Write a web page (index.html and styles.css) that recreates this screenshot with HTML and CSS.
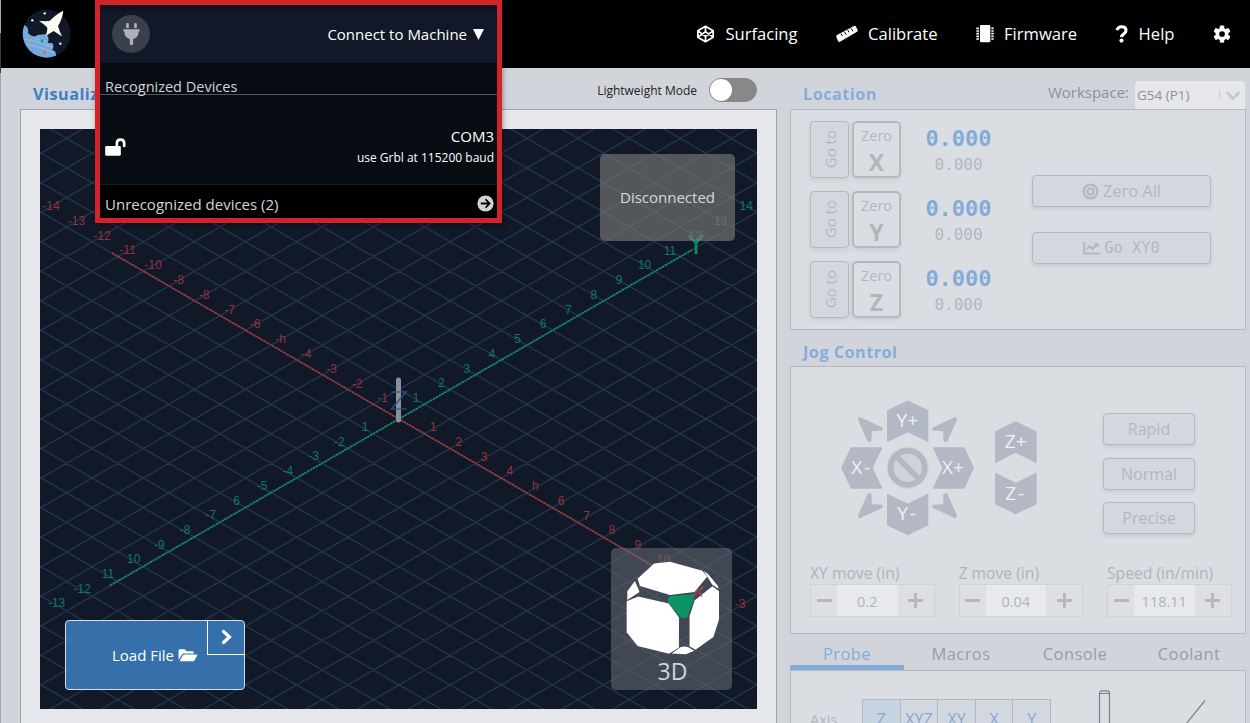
FILE: index.html
```html
<!DOCTYPE html>
<html lang="en">
<head>
<meta charset="utf-8">
<title>Machine Control</title>
<link rel="stylesheet" href="styles.css">
</head>
<body>
<div class="app">
  <header class="topbar">
    <svg class="logo" viewBox="0 0 150 150">
      <defs><clipPath id="disc"><circle cx="74" cy="74" r="72"/></clipPath></defs>
      <circle cx="74" cy="74" r="72" fill="#111827"/>
      <g clip-path="url(#disc)">
        <path d="M0 45C12 48 22 58 18 72C25 80 20 78 33 82C40 84 42 77 55 77C75 72 83 79 78 102H90C98 108 93 124 88 124C98 122 104 128 102 150H0Z" fill="#74a9dc"/>
        <path d="M5 91C40 95 60 101 91 116M11 105C40 112 65 117 94 130M20 75C40 92 60 95 75 97" fill="none" stroke="#b2d5f0" stroke-width="1.5"/>
      </g>
      <path d="M124 5C104 14 92 28 82 36C70 37 58 36 51 35C60 42 71 49 76 56C76 66 73 76 70 81C80 77 89 69 95 66C105 72 113 79 120 82C115 72 111 61 108 51C116 38 122 22 124 5Z" fill="#fffef6"/>
      <g fill="#fff"><circle cx="68" cy="13" r="3.5"/><circle cx="31" cy="34" r="3.5"/><circle cx="115" cy="104" r="3.5"/></g>
      <circle cx="27" cy="94" r="4" fill="#e9a04a"/><circle cx="60" cy="96" r="5" fill="#16a085"/><circle cx="68" cy="131" r="5" fill="#e8615e"/>
    </svg>
    <nav class="nav">
      <a class="nav-item"><svg class="ico-cube" viewBox="0 0 20 20" fill="none" stroke="#fff" stroke-width="1.9" stroke-linejoin="round"><path d="M10 1.5L18.5 6.5V13.5L10 18.5L1.5 13.5V6.5ZM1.5 6.5L10 12.5L18.5 6.5M1.5 13.5L10 7.5L18.5 13.5M10 1.5V7.5M10 12.5V18.5"/></svg><span>Surfacing</span></a>
      <a class="nav-item"><svg class="ico-ruler" viewBox="0 0 66 52"><path d="M3 29L54 2Q58 0 60 4L65 15Q66 18 62 20L12 49Q8 51 6 47L1 35Q0 31 3 29Z" fill="#fff"/><path d="M15 25L19 32M25 19L31 28M35 14L39 21M45 9L51 18" stroke="#000" stroke-width="3"/></svg><span>Calibrate</span></a>
      <a class="nav-item"><svg class="ico-chip" viewBox="0 0 54 54"><rect x="12" y="0" width="31" height="52" rx="4" fill="#fff"/><path d="M1 10H9M1 18H9M1 26H9M1 34H9M1 42H9M46 10H53M46 18H53M46 26H53M46 34H53M46 42H53" stroke="#fff" stroke-width="5"/></svg><span>Firmware</span></a>
      <a class="nav-item"><svg class="ico-help" viewBox="0 0 36 52"><path d="M5 15C7 8 12 5 18 5C26 5 31 9 31 16C31 26 19 24 18 35" fill="none" stroke="#fff" stroke-width="9"/><circle cx="18" cy="45" r="6" fill="#fff"/></svg><span>Help</span></a>
      <a class="nav-item"><svg class="ico-gear" viewBox="0 0 24 24"><g fill="#fff"><circle cx="12" cy="12" r="8.5"/><rect x="9" y="0.5" width="6" height="23" rx="1.5"/><rect x="9" y="0.5" width="6" height="23" rx="1.5" transform="rotate(60 12 12)"/><rect x="9" y="0.5" width="6" height="23" rx="1.5" transform="rotate(120 12 12)"/></g><circle cx="12" cy="12" r="3.8" fill="#000"/></svg></a>
    </nav>
  </header>

  <main class="main">
    <section class="visualizer">
      <div class="section-head vis-head">
        <h2 class="title">Visualizer</h2>
        <div class="mode"><span>Lightweight Mode</span><span class="switch"></span></div>
      </div>
      <div class="vis-panel">
        <div class="canvas">
          <svg class="scene" viewBox="40 129 717 580">
            <rect x="40" y="129" width="717" height="580" fill="#111827"/>
            <path id="grid" fill="none" stroke="#223447" stroke-width="1.5"/>
            <path d="M112 253L686 585" stroke="#a2383e" stroke-width="1.7" stroke-dasharray="2.5 .8"/>
            <path d="M110 585.5L692 250" stroke="#108c6d" stroke-width="1.7" stroke-dasharray="2.5 .8"/>
            <g id="ticks" class="ticks"></g>
            <path d="M398.5 380V420" stroke="#8b9097" stroke-width="5" stroke-linecap="round"/>
            <path d="M391.500 392H406L391.500 409H406.500" fill="none" stroke="#27578c" stroke-width="1.700" stroke-opacity=".8"/>
            <path d="M689 235L696 243L703 235M696 243V254" fill="none" stroke="#0b8766" stroke-width="3"/>
            <path d="M692 587L703 597M703 587L692 597" stroke="#a2383e" stroke-width="2"/>
          </svg>
          <div class="status">Disconnected</div>
          <div class="view-cube">
            <svg class="cube" viewBox="137 91 284 283">
              <g fill="#fff">
                <path d="M172 144L222 98L270 93L368 120L382 138L344 184L270 193L179 166Z"/>
                <path d="M139 212L174 198L266 219L297 261V352L267 371L172 347L139 306Z"/>
                <path d="M329 257L345 209L398 167L418 182V267L401 320L347 359L329 348Z"/>
                <path d="M164 151L178 184L141 208V182Z"/><path d="M372 121L384 129L415 166L416 174L398 162Z"/>
                <path d="M275 370L301 351Q315 346 327 352L343 362L318 372Z"/>
              </g>
              <path d="M263 207Q264 197 275 196L337 191Q344 193 342 207L323 259Q318 265 306 263Q301 262 297 256L264 214Z" fill="#0a9465"/>
              <path d="M346 183L367 197M362 170L347 200" stroke="#8c303a" stroke-width="4"/>
            </svg>
            <span>3D</span>
          </div>
          <div class="load"><span>Load File</span><svg class="ico-folder" viewBox="0 0 60 40"><path d="M1 34V5Q1 1 5 1H19L26 7H44Q48 7 48 12V14H18Q13 14 11 18Z" fill="#fff"/><path d="M4 38L14 20Q16 17 20 17H57Q60 17 58 21L50 35Q48 38 44 38Z" fill="#fff"/></svg>
            <div class="load-more"><svg viewBox="0 0 12 16"><path d="M2.5 2.5L8.5 8L2.5 13.5" fill="none" stroke="#fff" stroke-width="3.2" stroke-linecap="round"/></svg></div>
          </div>
        </div>
      </div>
    </section>

    <section class="side">
      <div class="section-head side-head">
        <h2 class="title muted">Location</h2>
        <div class="workspace"><span>Workspace:</span><div class="select"><span>G54 (P1)</span><i class="bar"></i><svg viewBox="0 0 14 10"><path d="M1.5 2L7 7.5L12.5 2" fill="none" stroke="#c4c6c9" stroke-width="2.5" stroke-linecap="round"/></svg></div></div>
      </div>
      <div class="panel location">
        <div class="axes">
          <div class="axis-row"><div class="goto"><span>Go to</span></div><div class="zero">Zero<b>X</b></div><div class="pos"><b>0.000</b><span>0.000</span></div></div>
          <div class="axis-row"><div class="goto"><span>Go to</span></div><div class="zero">Zero<b>Y</b></div><div class="pos"><b>0.000</b><span>0.000</span></div></div>
          <div class="axis-row"><div class="goto"><span>Go to</span></div><div class="zero">Zero<b>Z</b></div><div class="pos"><b>0.000</b><span>0.000</span></div></div>
        </div>
        <div class="actions">
          <div class="btn"><svg class="ico-target" viewBox="0 0 18 18" fill="none" stroke="#b3b7c3"><circle cx="9" cy="9" r="7.3" stroke-width="2.3"/><circle cx="9" cy="9" r="3.4" stroke-width="2.4"/></svg><span>Zero All</span></div>
          <div class="btn mono"><svg class="ico-chart" viewBox="0 0 18 14" fill="none" stroke="#b3b7c3" stroke-width="2.2"><path d="M1.2 0V12.3H17.5M4 8L7 4.5L10 7.5L14.5 3"/><path d="M11 1H16.5V6.5Z" fill="#b3b7c3" stroke="none"/></svg><span>Go XY0</span></div>
        </div>
      </div>

      <div class="section-head jog-head"><h2 class="title muted">Jog Control</h2></div>
      <div class="panel jog">
        <div class="jog-top">
          <svg class="pad" viewBox="150 180 600 410">
            <g fill="#b3b8c5">
              <path d="M291 210L353 181L415 210V306L353 276L291 306Z"/><path d="M291 460L353 490L415 460V555L353 585L291 555Z"/>
              <path d="M183 321H278L248 383L278 446H183L153 383Z"/><path d="M428 321H523L552 383L523 446H428L457 383Z"/>
              <path d="M615 274L677 243L740 274V369L677 338L615 369Z"/><path d="M615 397L677 428L740 397V492L677 522L615 492Z"/>
              <path d="M204 236Q205 228 213 232L275 261Q281 265 276 271L245 273V302Q237 309 232 302L206 244Z"/>
              <path d="M204 236Q205 228 213 232L275 261Q281 265 276 271L245 273V302Q237 309 232 302L206 244Z" transform="matrix(-1 0 0 1 705 0)"/>
              <path d="M204 236Q205 228 213 232L275 261Q281 265 276 271L245 273V302Q237 309 232 302L206 244Z" transform="matrix(1 0 0 -1 0 765)"/>
              <path d="M204 236Q205 228 213 232L275 261Q281 265 276 271L245 273V302Q237 309 232 302L206 244Z" transform="matrix(-1 0 0 -1 705 765)"/>
            </g>
            <circle cx="353" cy="383" r="63" fill="#cdd0d5"/><circle cx="353" cy="383" r="51" fill="#d2d3d6" stroke="#b3b8c5" stroke-width="17"/>
            <path d="M316 346L390 420" stroke="#b3b8c5" stroke-width="17"/>
            <g class="pad-labels"><text x="352" y="262">Y+</text><text x="212" y="403">X&#8202;-</text><text x="489" y="403">X+</text><text x="350" y="541">Y&#8202;-</text><text x="677" y="325">Z+</text><text x="674" y="479">Z&#8202;-</text></g>
          </svg>
          <div class="speeds"><div class="btn">Rapid</div><div class="btn">Normal</div><div class="btn">Precise</div></div>
        </div>
        <div class="fields">
          <label class="field"><span>XY move (in)</span><div class="stepper"><i class="minus"></i><em>0.2</em><i class="plus"></i></div></label>
          <label class="field"><span>Z move (in)</span><div class="stepper"><i class="minus"></i><em>0.04</em><i class="plus"></i></div></label>
          <label class="field"><span>Speed (in/min)</span><div class="stepper"><i class="minus"></i><em>118.11</em><i class="plus"></i></div></label>
        </div>
      </div>

      <div class="tabs"><span class="tab active">Probe</span><span class="tab">Macros</span><span class="tab">Console</span><span class="tab">Coolant</span></div>
      <div class="panel probe">
        <span class="axis-label">Axis</span>
        <div class="axis-buttons"><span class="on">Z</span><span>XYZ</span><span>XY</span><span>X</span><span>Y</span></div>
        <svg class="tool" viewBox="0 0 120 40" fill="none" stroke="#7e8186" stroke-width="1.2"><path d="M5.5 40V3Q5.5 .8 8 .8H13Q15.500 .8 15.500 3V40M5.500 3.500H15.500M92 34L111 10.500"/></svg>
      </div>
    </section>
  </main>

  <div class="connect">
    <div class="connect-head">
      <div class="plug"><svg viewBox="0 0 50 66"><path d="M9 15V4Q9 0 13 0Q17 0 17 4V15ZM33 15V4Q33 0 37 0Q41 0 41 4V15ZM3 19H47Q50 19 50 22Q50 26 46 26V30Q45 43 30 48V63Q30 66 27 66H23Q20 66 20 63V48Q5 43 4 30V26Q0 26 0 22Q0 19 3 19Z" fill="#aeb2b8"/></svg></div>
      <div class="connect-title"><span>Connect to Machine</span><svg viewBox="0 0 11 11"><path d="M0 0H11L5.500 11Z" fill="#fff"/></svg></div>
    </div>
    <div class="connect-body">
      <div class="rec">Recognized Devices</div>
      <div class="device">
        <svg class="lock" viewBox="0 0 62 54"><rect x="0" y="24" width="47" height="29" rx="4" fill="#fff"/><path d="M35 25V17Q35 5 46 5Q57 5 57 16V24" fill="none" stroke="#fff" stroke-width="8" stroke-linecap="round"/></svg>
        <div class="port"><span>COM3</span><small>use Grbl at 115200 baud</small></div>
      </div>
    </div>
    <div class="unrec"><span>Unrecognized devices (2)</span><svg viewBox="0 0 18 18"><circle cx="9" cy="9" r="8.600" fill="#d2d2d2"/><path d="M4 9H13M9 4.500L13.300 9L9 13.500" fill="none" stroke="#000" stroke-width="1.900"/></svg></div>
  </div>
</div>
<script src="scene.js"></script>
</body>
</html>
```
FILE: styles.css
```css
* { box-sizing: border-box; }
body { margin: 0; width: 1250px; height: 723px; overflow: hidden; font-family: "Open Sans", "Noto Sans", sans-serif; font-size: 16px; line-height: 22px; background: linear-gradient(#aaa 0 33px, #3c3c3c 33px 73px, #a3a4a8 73px); }
svg { display: block; flex: none; overflow: visible; }
.app { position: relative; margin-left: 1px; width: 1249px; height: 723px; background: #d1d5db; overflow: hidden; }
.topbar { height: 68px; background: #000; display: flex; align-items: center; justify-content: space-between; padding: 0 19px 0 21px; }
.logo { width: 50px; height: 50px; }
.nav { display: flex; align-items: center; color: #fff; font-size: 16.6px; }
.nav-item { display: flex; align-items: center; }
.nav-item + .nav-item { margin-left: 38px; }
.nav-item span { margin-left: 10.5px; }
.nav-item:last-child { margin-left: 38.5px; }
.ico-cube { width: 19px; height: 18px; }
.ico-ruler { width: 22px; height: 18px; }
.ico-chip { width: 18px; height: 18px; }
.ico-help { width: 13px; height: 18px; }
.ico-gear { width: 18px; height: 18px; }
.main { display: flex; gap: 13px; padding-left: 19px; }
.visualizer { width: 757px; }
.section-head { display: flex; justify-content: space-between; align-items: center; }
.title { margin: 0; font-size: 16.2px; line-height: 22px; letter-spacing: .5px; color: #3d7fc6; }
.title.muted { color: #86add9; }
.vis-head { height: 41px; padding: 7px 20px 0 13px; }
.vis-head .title { margin-top: 4px; }
.mode { display: flex; align-items: center; gap: 12px; font-size: 12px; color: #222; margin-top: -4px; }
.mode span:first-child { padding-top: 1px; }
.switch { width: 48px; height: 24px; border-radius: 12px; background: #888; border: 1px solid #888; }
.switch::before { content: ""; display: block; width: 22px; height: 22px; border-radius: 50%; background: #fff; }
.vis-panel { height: 640px; border: 1px solid #9ca3af; background: #e5e7eb; padding: 19px; }
.canvas { position: relative; width: 717px; height: 580px; overflow: hidden; }
.scene { width: 717px; height: 580px; overflow: hidden; }
.ticks text { font: 12px "Liberation Sans", Arial, sans-serif; text-anchor: middle; }
.ticks .x { fill: #963238; }
.ticks .y { fill: #0d7a5f; }
.status { position: absolute; left: 560px; top: 25px; width: 135px; height: 87px; border-radius: 5px; background: rgba(120, 120, 115, .66); color: #d5d8dc; font-size: 15px; display: flex; align-items: center; justify-content: center; padding-bottom: 1px; }
.view-cube { position: absolute; left: 571px; top: 419px; width: 121px; height: 142px; border-radius: 5px; background: rgba(110, 115, 125, .52); display: flex; flex-direction: column; align-items: center; padding: 13px 0 0 2px; color: #d1d5db; font-size: 23px; line-height: 32px; }
.cube { width: 94px; height: 94px; }
.load { position: absolute; left: 25px; top: 491px; width: 180px; height: 70px; border: 1px solid #d5dfea; border-radius: 4px; background: rgba(55, 118, 180, .94); color: #fff; font-size: 15px; display: flex; align-items: center; justify-content: center; gap: 4px; }
.ico-folder { width: 20px; height: 13px; }
.load-more { position: absolute; right: -1px; top: 0; width: 38px; height: 34px; border-left: 1px solid #fff; border-bottom: 1px solid #fff; display: flex; align-items: center; justify-content: center; padding-bottom: 2px; }
.load-more svg { width: 12px; height: 16px; }
.side { width: 456px; color: #b3b7c0; }
.panel { border: 1px solid #b3b8c4; background: #dadde2; }
.side-head { height: 41px; padding: 10px 1px 0 13px; align-items: stretch; }
.side-head .title { padding-top: 5px; }
.workspace { display: flex; gap: 6px; color: #8d9096; font-size: 15px; padding-top: 3px; }
.select { width: 110px; height: 28px; background: #e6e7ea; border-radius: 4px 4px 0 0; display: flex; align-items: center; padding: 0 5px 1px 2px; font-size: 13.5px; }
.select .bar { width: 1px; height: 9px; background: #c9cbce; margin-left: auto; margin-right: 6px; }
.select svg { width: 14px; height: 10px; margin-top: 3px; }
.location { height: 221px; padding: 11px 34px 0 19px; display: flex; justify-content: space-between; }
.axes { display: flex; flex-direction: column; gap: 13px; }
.axis-row { display: flex; gap: 3px; height: 57px; }
.goto { width: 39px; border: 1px solid #b3b8c4; border-radius: 4px; background: #d3d7df; display: flex; align-items: center; justify-content: center; box-shadow: 0 2px 4px #c9ccd2; font-size: 15px; }
.goto span { writing-mode: vertical-rl; transform: rotate(180deg); }
.zero { width: 49px; border: 2px solid #b3b8c4; border-radius: 5px; text-align: center; font-size: 14.5px; line-height: 25px; box-shadow: 0 2px 4px #c9ccd2; }
.zero b { display: block; font-size: 23px; line-height: 28px; color: #b0b5c0; }
.pos { width: 67px; margin-left: 21px; text-align: center; font-family: "DejaVu Sans Mono", monospace; line-height: 26px; padding-top: 5px; }
.pos b { display: block; font-size: 22px; color: #83abd7; }
.pos span { font-size: 16px; }
.actions { width: 179px; padding-top: 54px; display: flex; flex-direction: column; gap: 25px; }
.btn { height: 32px; border: 1px solid #b3b8c4; border-radius: 4px; background: #d3d7df; box-shadow: 0 2px 4px #c5c9d0; display: flex; align-items: center; justify-content: center; gap: 4px; }
.actions .btn { font-size: 16.4px; }
.actions .mono { font-family: "DejaVu Sans Mono", monospace; font-size: 15.3px; }
.ico-target { width: 17px; height: 17px; }
.ico-chart { width: 17px; height: 13px; }
.jog-head { height: 36px; padding: 8px 12px 0 13px; }
.jog { height: 268px; padding: 33px 13px 0 19px; }
.jog-top { display: flex; justify-content: space-between; height: 163px; padding: 0 37px 0 30px; }
.pad { width: 200px; height: 137px; }
.pad-labels text { font-size: 57px; fill: #eff1f4; text-anchor: middle; }
.speeds { width: 92px; padding-top: 13px; display: flex; flex-direction: column; gap: 12.5px; }
.speeds .btn { flex: none; }
.fields { display: flex; gap: 24px; }
.field { width: 124.5px; font-size: 15.7px; white-space: nowrap; color: #b1b4b9; }
.field > span { display: block; line-height: 21px; }
.stepper { display: flex; height: 33px; border: 1px solid #cfd2d6; background: #dddfe2; }
.stepper i { position: relative; display: block; width: 26px; }
.stepper .plus { width: 36px; }
.stepper i::before, .stepper .plus::after { content: ""; position: absolute; left: 50%; top: 50%; width: 15px; height: 3px; margin: -2px 0 0 -7.5px; background: #b6b8bc; }
.stepper .plus::after { transform: rotate(90deg); }
.stepper em { flex: 1; font-style: normal; font-size: 14.5px; line-height: 33px; text-align: center; background: #e7e9ec; }
.tabs { height: 36px; display: flex; }
.tab { flex: 1; text-align: center; line-height: 40px; font-size: 16.5px; letter-spacing: .4px; color: #999da4; }
.tab.active { color: #86add9; border-bottom: 5px solid #86add9; }
.probe { height: 60px; display: flex; padding-left: 19px; }
.axis-label { width: 52px; font-size: 14.5px; padding-top: 38px; }
.axis-buttons { width: 189px; margin-top: 28px; height: 40px; display: flex; border: 1px solid #b3b8c4; background: #d3d7df; color: #86a8d6; }
.axis-buttons span { flex: 1 1 0; text-align: center; line-height: 38px; }
.axis-buttons span + span { border-left: 1px solid #b3b8c4; }
.axis-buttons .on { background: #c6d3e1; }
.tool { width: 120px; height: 40px; margin: 19px 0 0 43px; }
.connect { position: absolute; left: 94px; top: 0; width: 407px; height: 223px; border: 5px solid #d3222a; color: #fff; background: #000; box-shadow: 1px 2px 5px rgba(0, 0, 0, .35); }
.connect-head { height: 58px; background: linear-gradient(#0b0f18, #111827 8px); display: flex; align-items: center; justify-content: space-between; padding: 0 12px; }
.plug { width: 38px; height: 38px; border-radius: 50%; background: #3a414d; display: flex; align-items: center; justify-content: center; }
.plug svg { width: 17px; height: 22px; }
.connect-title { display: flex; align-items: center; gap: 6px; font-size: 15px; padding-right: 1px; }
.connect-title svg { width: 11px; height: 11px; }
.connect-body { height: 122px; background: #060c12; border-bottom: 1px solid #111827; }
.rec { height: 32px; padding: 14px 0 0 5px; font-size: 14.5px; line-height: 20px; color: #d0d3d8; border-bottom: 1px solid #4b5563; }
.device { display: flex; justify-content: space-between; padding: 30px 3px 0 5px; }
.lock { width: 21px; height: 18px; margin-top: 13px; }
.port { display: flex; flex-direction: column; align-items: flex-end; font-size: 15px; }
.port small { font-size: 12px; line-height: 21px; }
.unrec { height: 33px; display: flex; align-items: center; justify-content: space-between; padding: 4px 3px 0 5px; font-size: 15px; color: #d2d4d8; }
.unrec svg { width: 17px; height: 17px; }
```
FILE: scene.js
```js
const ticks = document.getElementById("ticks");

// Isometric floor grid: two families of parallel lines through the origin.
const origin = { x: 399, y: 419 };
const step = { x: 25.57, y: 14.77 };
const slope = step.y / step.x;
let d = "";
for (let k = -30; k <= 30; k++) {
  const offset = k * step.y * 2;
  const left = 40 - origin.x;
  const right = 757 - origin.x;
  for (const s of [slope, -slope]) {
    d += `M40 ${origin.y + offset + left * s}L757 ${origin.y + offset + right * s}`;
  }
}
document.getElementById("grid").setAttribute("d", d);

// Places a run of tick labels, each one grid step from the last.
function labels(cls, names, x, y, dx, dy) {
  names.forEach((name, i) => {
    if (!name) return;
    const t = document.createElementNS("http://www.w3.org/2000/svg", "text");
    t.setAttribute("class", cls);
    t.setAttribute("x", x + dx * i);
    t.setAttribute("y", y + dy * i + 4);
    t.textContent = name;
    ticks.appendChild(t);
  });
}

labels("x", ["-14", "-13", "-12", "-11", "-10", "-8", "-8", "-7", "-6", "-h", "-4", "-3", "-2", "-1"], 51, 206, 25.5, 14.8);
labels("x", ["1", "2", "3", "4", "h", "6", "7", "8", "9", "10", "", "", "-3"], 433, 427, 25.6, 14.75);
labels("y", ["1", "-2", "-3", "-4", "-5", "6", "-7", "-8", "-9", "10", "11", "-12", "-13"], 365, 427, -25.7, 14.7);
labels("y", ["1", "2", "3", "4", "5", "6", "7", "8", "9", "10", "11", "12", "13", "14"], 416, 398, 25.4, -14.75);
```
